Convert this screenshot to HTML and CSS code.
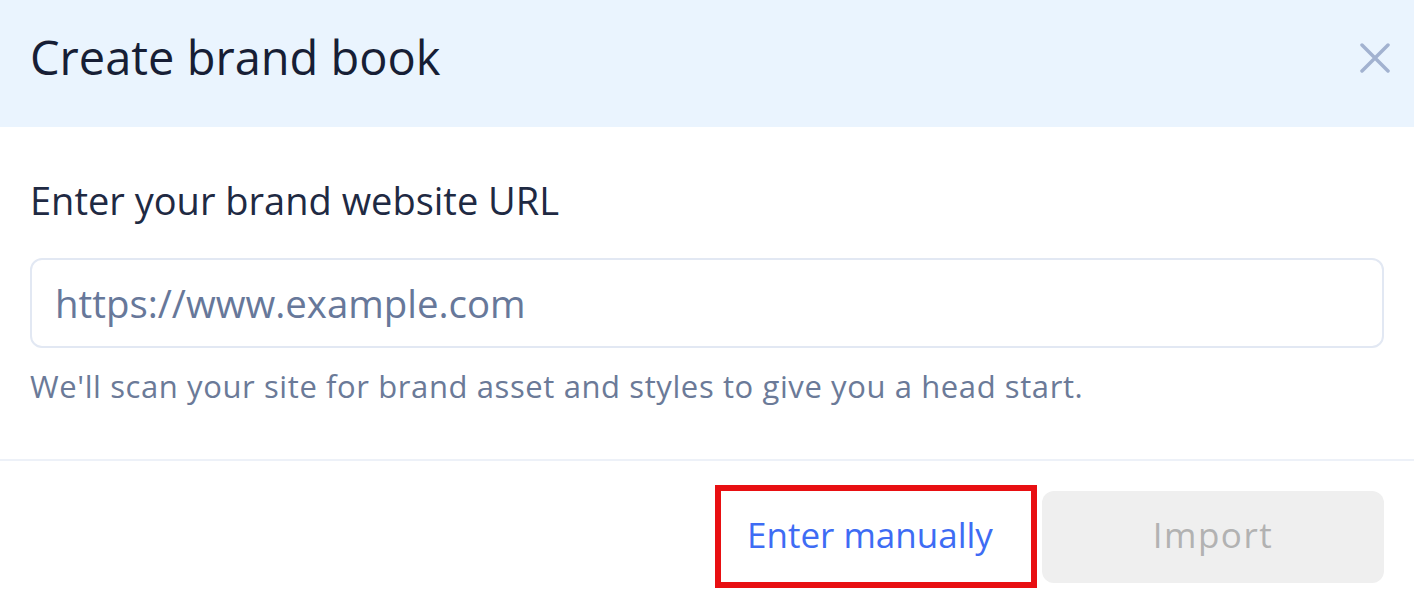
FILE: index.html
```html
<!DOCTYPE html>
<html lang="en">
<head>
<meta charset="utf-8">
<title>Create brand book</title>
<link rel="stylesheet" href="styles.css">
</head>
<body>
<div class="modal">
  <header class="modal-header">
    <h1 class="modal-title">Create brand book</h1>
    <button class="close-btn" aria-label="Close">
      <svg width="30" height="30" viewBox="0 0 30 30"><path d="M2 2 L28 28 M28 2 L2 28" stroke="#a2b2d0" stroke-width="3.5" stroke-linecap="round" fill="none"/></svg>
    </button>
  </header>
  <section class="modal-body">
    <label class="field-label" for="url">Enter your brand website URL</label>
    <input class="url-input" id="url" type="text" placeholder="https://www.example.com">
    <p class="help-text">We'll scan your site for brand asset and styles to give you a head start.</p>
  </section>
  <footer class="modal-footer">
    <button class="btn-link">Enter manually</button>
    <button class="btn-import" disabled>Import</button>
  </footer>
</div>
</body>
</html>
```
FILE: styles.css
```css
* { box-sizing: border-box; }
html, body { margin: 0; padding: 0; background: #ffffff; }
body { font-family: "Open Sans", "Noto Sans", "Liberation Sans", sans-serif; }

.modal { width: 1414px; height: 610px; overflow: hidden; }

.modal-header {
  height: 127px;
  background: #eaf4fe;
  display: flex;
  justify-content: space-between;
  align-items: flex-start;
  padding: 0 24px 0 30px;
}
.modal-title {
  margin: 0;
  padding-top: 27px;
  font-size: 47px;
  line-height: 1.3;
  font-weight: 400;
  color: #171e35;
}
.close-btn {
  margin-top: 43px;
  padding: 0;
  border: 0;
  background: transparent;
  width: 30px;
  height: 30px;
  display: flex;
}

.modal-body {
  padding: 49px 30px 0 30px;
  height: 334px;
  display: flex;
  flex-direction: column;
  border-bottom: 2px solid #edf1f8;
}
.field-label {
  font-size: 38px;
  line-height: 48px;
  color: #1f2a43;
  margin-bottom: 34px;
}
.url-input {
  flex: none;
  height: 90px;
  border: 2px solid #e2e8f3;
  border-radius: 12px;
  padding: 0 23px;
  font-family: inherit;
  font-size: 38.4px;
  color: #1f2a43;
  outline: none;
}
.url-input::placeholder { color: #67789a; }
.help-text {
  margin: 18px 0 0 0;
  font-size: 31px;
  letter-spacing: 0.6px;
  line-height: 40px;
  color: #6b7a98;
}

.modal-footer {
  display: flex;
  justify-content: flex-end;
  align-items: center;
  gap: 5px;
  padding: 24px 30px 0 30px;
}
.btn-link {
  width: 322px;
  height: 103px;
  border: 6px solid #e80f12;
  background: #ffffff;
  color: #3e6cf4;
  font-family: inherit;
  font-size: 35px;
  text-align: left;
  padding: 0 0 4px 26px;
}
.btn-import {
  width: 342px;
  height: 92px;
  border: 0;
  border-radius: 12px;
  background: #efefef;
  color: #b2b2b2;
  font-family: inherit;
  font-size: 35px;
  letter-spacing: 1.5px;
  padding: 0 0 4px 0;
}
```
